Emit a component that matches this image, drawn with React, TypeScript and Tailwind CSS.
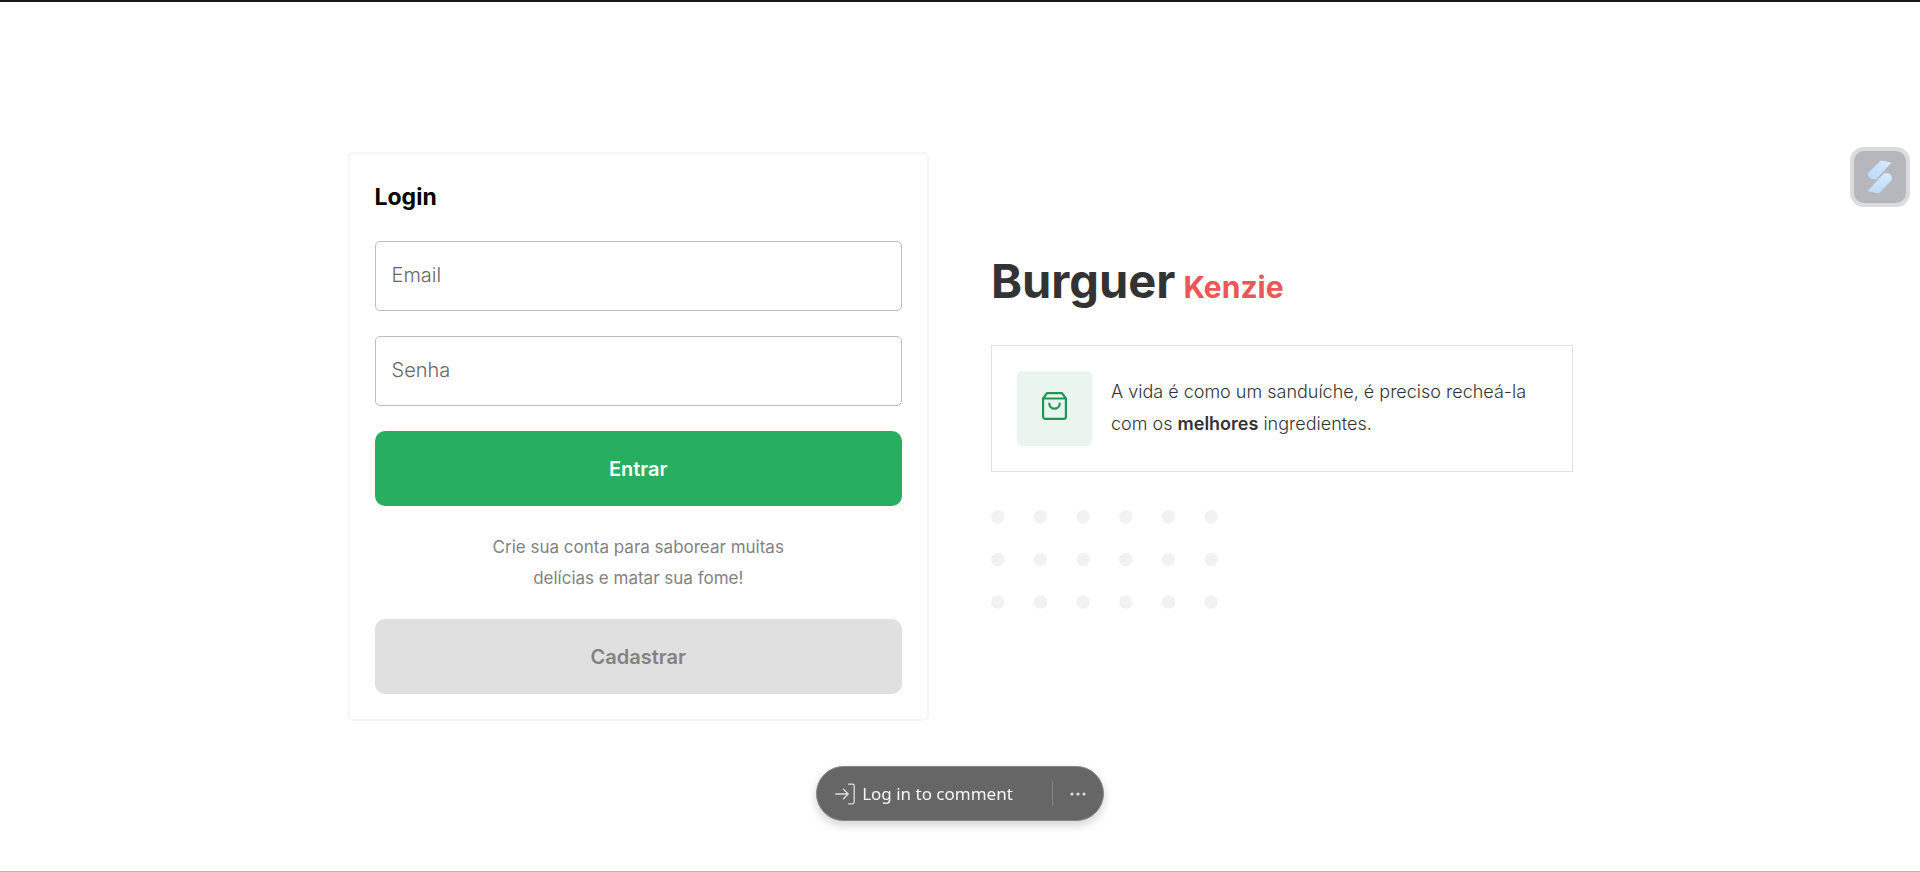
import React from "react";

const DOT_COLUMNS = [0, 1, 2, 3, 4, 5];
const DOT_ROWS = [0, 1, 2];

function Field({ id, label, type }: { id: string; label: string; type: string }) {
  return (
    <input
      id={id}
      type={type}
      aria-label={label}
      placeholder={label}
      className="block h-[70px] w-full rounded-[5px] border border-[#bdbdbd] bg-white px-4 pb-0.5 text-[20px] font-light text-[#333333] outline-none placeholder:text-[#666666]"
    />
  );
}

function LoginCard() {
  return (
    <form
      onSubmit={(event) => event.preventDefault()}
      className="flex flex-col gap-[25px] rounded-[5px] border-2 border-[#f5f5f5] bg-white p-[25px]"
    >
      <h2 className="text-[23px] leading-[37px] font-bold text-black">Login</h2>
      <Field id="email" label="Email" type="email" />
      <Field id="senha" label="Senha" type="password" />
      <button type="submit" className="h-[75px] rounded-[10px] bg-[#27ae60] text-[20px] font-semibold text-white">
        Entrar
      </button>
      <p className="mx-auto max-w-[310px] pt-px text-center text-[17px] leading-[31px] text-[#828282]">
        Crie sua conta para saborear muitas delícias e matar sua fome!
      </p>
      <button type="button" className="h-[75px] rounded-[10px] bg-[#e0e0e0] text-[20px] font-semibold text-[#828282]">
        Cadastrar
      </button>
    </form>
  );
}

function BagIcon() {
  return (
    <svg width="25" height="28" viewBox="0 0 25 28" fill="none" stroke="#219653" strokeWidth="2.2" strokeLinecap="round" strokeLinejoin="round" aria-hidden="true">
      <path d="M1.100 6.500 5 1.100h15l3.900 5.400V24.500a2.400 2.400 0 0 1-2.400 2.400h-18a2.400 2.400 0 0 1-2.400-2.400Z" />
      <path d="M1.100 6.500h22.800" />
      <path d="M7.300 11.500a5.200 5.200 0 0 0 10.400 0" />
    </svg>
  );
}

function Dots() {
  return (
    <svg width="227" height="100" viewBox="0 0 227 100" fill="#f2f2f2" aria-hidden="true">
      {DOT_ROWS.map((row) =>
        DOT_COLUMNS.map((column) => (
          <circle key={`${row}-${column}`} cx={6.8 + column * 42.67} cy={6.8 + row * 42.67} r="6.8" />
        )),
      )}
    </svg>
  );
}

function Intro() {
  return (
    <section className="flex flex-col pb-3">
      <h1 className="flex items-baseline gap-2 text-[47px] leading-[58px] font-bold text-[#333333]">
        Burguer <span className="text-[30px] leading-none text-[#eb5757]">Kenzie</span>
      </h1>
      <div className="mt-[35px] flex items-center gap-[19px] border border-[#e0e0e0] bg-white p-[25px]">
        <div className="flex size-[75px] shrink-0 items-center justify-center rounded-[5px] bg-[#e9f5ee] pb-[5px]">
          <BagIcon />
        </div>
        <p className="max-w-[420px] text-[18px] leading-8 font-light text-[#333333]">
          A vida é como um sanduíche, é preciso recheá-la com os <strong className="font-semibold">melhores</strong>{" "}
          ingredientes.
        </p>
      </div>
      <div className="mt-[38px]">
        <Dots />
      </div>
    </section>
  );
}

function ExtensionBadge() {
  return (
    <button
      type="button"
      aria-label="Shortcuts"
      className="fixed top-[147px] right-[10px] flex size-[60px] items-center justify-center rounded-[14px] border-4 border-[#dadbdf] bg-[#b6b7bc]"
    >
      <svg width="26" height="34" viewBox="0 0 26 34" aria-hidden="true">
        <defs>
          <linearGradient id="upper" x1="1" y1="0" x2="0" y2="1">
            <stop offset="0" stopColor="#d9ebfc" />
            <stop offset="1" stopColor="#b9dafa" />
          </linearGradient>
          <linearGradient id="lower" x1="0.3" y1="0" x2="0.6" y2="1">
            <stop offset="0" stopColor="#dfedfb" />
            <stop offset="1" stopColor="#b9dafa" />
          </linearGradient>
        </defs>
        <path d="M14 .5 24.500 2.500 9 19.500C4 20-.5 17 1.500 12.500Z" fill="url(#upper)" />
        <path d="M17 13.500C22 12 26.500 15.500 24.500 20L12 33.500.5 31Z" fill="url(#lower)" />
      </svg>
    </button>
  );
}

function CommentBar() {
  return (
    <div className="fixed inset-x-0 bottom-[51px] flex justify-center">
      <div className="flex h-[55px] items-center rounded-full border border-[#858585] bg-[#666666] pr-[17px] pl-[18px] font-['Noto_Sans',sans-serif] text-white shadow-[0_4px_10px_rgba(0,0,0,0.18)]">
        <button type="button" className="flex items-center gap-[7px] pr-[39px] text-[17px] text-[#f5f5f5]">
          <svg width="20" height="22" viewBox="0 0 20 22" fill="none" stroke="#dddddd" strokeWidth="1.3" strokeLinecap="round" strokeLinejoin="round" aria-hidden="true">
            <path d="M.7 11h12.500M8.500 6.300l4.700 4.700-4.700 4.700M13.500 1.200h4a1.700 1.700 0 0 1 1.700 1.700v16.200a1.700 1.700 0 0 1-1.700 1.700h-4" />
          </svg>
          Log in to comment
        </button>
        <span className="h-[25px] w-px bg-[#858585]" />
        <button type="button" aria-label="More options" className="ml-[17px]">
          <svg width="16" height="4" viewBox="0 0 16 4" fill="#dddddd" aria-hidden="true">
            <circle cx="2" cy="2" r="1.6" />
            <circle cx="8" cy="2" r="1.6" />
            <circle cx="14" cy="2" r="1.6" />
          </svg>
        </button>
      </div>
    </div>
  );
}

export default function App() {
  return (
    <div className="flex min-h-screen flex-col justify-center border-t-2 border-b border-t-[#1a1718] border-b-[#b4b8ba] bg-white px-6 font-['Inter',sans-serif]">
      <main className="mx-auto grid w-full max-w-[1225px] items-center gap-[62px] lg:grid-cols-2">
        <LoginCard />
        <Intro />
      </main>
      <ExtensionBadge />
      <CommentBar />
    </div>
  );
}
